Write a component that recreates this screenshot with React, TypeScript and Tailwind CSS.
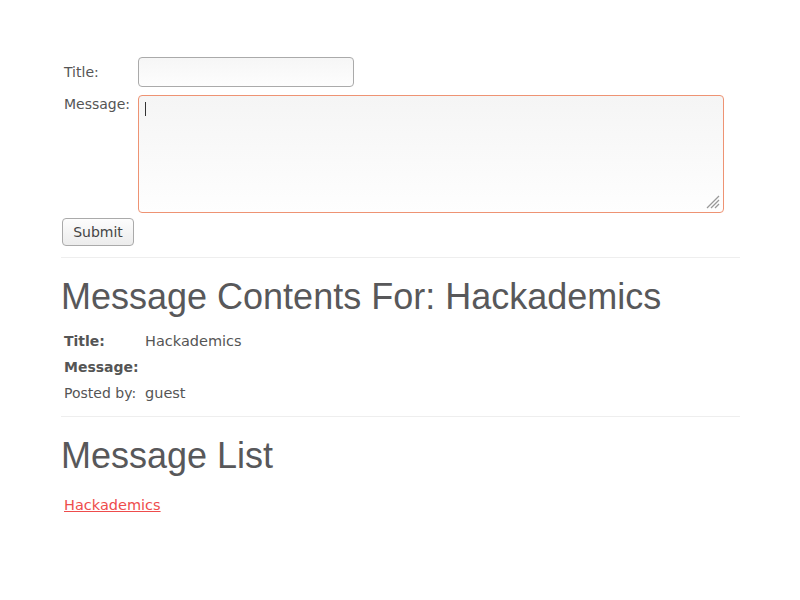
import React from "react";

export default function App() {
  const body = { fontFamily: '"DejaVu Sans", sans-serif' };
  const head = { fontFamily: '"Liberation Sans", Arial, sans-serif' };
  return (
    <div className="min-h-[600px] w-[800px] bg-white text-[#555] text-[14px] leading-[18px]" style={body}>
      <div className="ml-[61px] w-[679px] pt-[57px]">
        <div className="flex items-center h-[30px]">
          <div className="w-[77px] pl-[3px]">Title:</div>
          <div className="w-[216px] h-[30px] rounded-[4px] border border-[#aaa] bg-gradient-to-b from-[#f6f6f6] to-[#fdfdfd]" />
        </div>
        <div className="flex items-start mt-[8px]">
          <div className="w-[77px] pl-[3px]">Message:</div>
          <div className="relative w-[586px] h-[118px] rounded-[4px] border border-[#ee9373] bg-gradient-to-b from-[#f5f5f5] to-[#fefefe]">
            <div className="absolute left-[6px] top-[6px] w-px h-[14px] bg-[#333]" />
            <svg className="absolute right-[3px] bottom-[3px]" width="14" height="14" viewBox="0 0 14 14">
              <line x1="13" y1="1" x2="1" y2="13" stroke="#999" strokeWidth="1.2" />
              <line x1="13" y1="5" x2="5" y2="13" stroke="#999" strokeWidth="1.2" />
              <line x1="13" y1="9" x2="9" y2="13" stroke="#999" strokeWidth="1.2" />
            </svg>
          </div>
        </div>
        <div className="mt-[5px] ml-[1px]">
          <div className="flex items-center justify-center w-[72px] h-[28px] rounded-[4px] border border-[#aaa] bg-gradient-to-b from-[#fdfdfd] to-[#ececec] text-[14px] text-[#444]">
            Submit
          </div>
        </div>
        <div className="mt-[11px] h-px bg-[#eee]" />
        <h1 className="mt-[19px] text-[36px] leading-[40px] text-[#58585a]" style={head}>
          Message Contents For: Hackademics
        </h1>
        <div className="mt-[11px]">
          <div className="flex items-center h-[26px]">
            <div className="w-[84px] pl-[3px] font-bold">Title:</div>
            <div className="text-[14.5px]">Hackademics</div>
          </div>
          <div className="flex items-center h-[26px]">
            <div className="w-[84px] pl-[3px] font-bold">Message:</div>
            <div></div>
          </div>
          <div className="flex items-center h-[26px]">
            <div className="w-[84px] pl-[3px]">Posted by:</div>
            <div className="text-[14.5px]">guest</div>
          </div>
        </div>
        <div className="mt-[10px] h-px bg-[#eee]" />
        <h1 className="mt-[19px] text-[36px] leading-[40px] text-[#58585a]" style={head}>
          Message List
        </h1>
        <div className="mt-[20px] pl-[3px]">
          <a href="#" className="text-[14.5px] text-[#ee4c4c] underline">Hackademics</a>
        </div>
      </div>
    </div>
  );
}
